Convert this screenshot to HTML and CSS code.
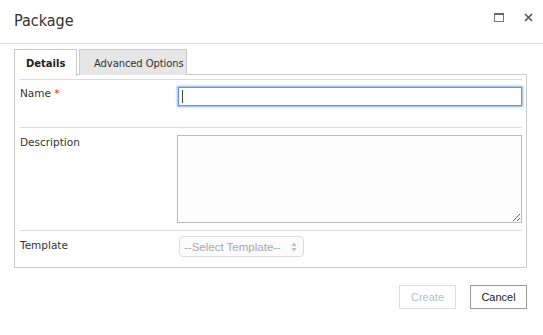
FILE: index.html
```html
<!DOCTYPE html>
<html>
<head>
<meta charset="utf-8">
<link rel="stylesheet" href="styles.css">
</head>
<body>
<div class="dialog">
  <div class="header">
    <div class="title">Package</div>
    <div class="actions">
      <svg class="icon-max" width="10" height="9" viewBox="0 0 10 9"><rect x="0.5" y="0.5" width="9" height="8" fill="none" stroke="#777" stroke-width="1"/><rect x="0" y="0" width="10" height="2" fill="#666"/></svg>
      <svg class="icon-close" width="9" height="9" viewBox="0 0 9 9"><path d="M1 1L8 8M8 1L1 8" stroke="#555" stroke-width="1.6"/></svg>
    </div>
  </div>
  <div class="content">
    <div class="tabs">
      <div class="tab active">Details</div>
      <div class="tab tab-adv">Advanced Options</div>
    </div>
    <div class="panel">
      <div class="row row-name">
        <div class="label">Name <span class="req">*</span></div>
        <div class="field">
          <div class="input-wrap">
            <input class="text-input" type="text">
            <span class="caret"></span>
          </div>
        </div>
      </div>
      <div class="row row-desc">
        <div class="label">Description</div>
        <div class="field"><textarea class="textarea"></textarea></div>
      </div>
      <div class="row row-tpl">
        <div class="label">Template</div>
        <div class="field">
          <div class="select">
            <span class="select-text">--Select Template--</span>
            <svg class="select-arrows" width="6" height="10" viewBox="0 0 6 10"><path d="M3 0.5L5.5 4H0.5Z M3 9.5L5.5 6H0.5Z" fill="#bbb"/></svg>
          </div>
        </div>
      </div>
    </div>
    <div class="footer">
      <button class="btn btn-disabled">Create</button>
      <button class="btn">Cancel</button>
    </div>
  </div>
</div>
</body>
</html>
```
FILE: styles.css
```css
html, body {
  margin: 0;
  padding: 0;
  background: #fff;
}
body {
  font-family: "DejaVu Sans", Verdana, sans-serif;
  color: #333;
}
.dialog {
  width: 543px;
  height: 335px;
}
.header {
  height: 43px;
  border-bottom: 1px solid #ddd;
  display: flex;
  align-items: center;
  padding: 0 10px 0 14px;
}
.title {
  flex: 1;
  font-size: 16px;
  font-stretch: semi-condensed;
  color: #333;
  margin-top: -3px;
}
.actions {
  display: flex;
  align-items: center;
  gap: 20px;
  margin-top: -9px;
}
.content {
  padding: 5px 16px 0 14px;
}
.tabs {
  display: flex;
  gap: 2px;
  height: 26px;
  position: relative;
  z-index: 1;
  margin-bottom: -1px;
}
.tab {
  box-sizing: border-box;
  height: 26px;
  border: 1px solid #ccc;
  border-bottom: none;
  background: #e6e6e6;
  font-size: 10px;
  color: #333;
  display: flex;
  align-items: center;
  white-space: nowrap;
  padding: 1px 0 0 14px;
}
.tab-adv {
  width: 108px;
  letter-spacing: -0.1px;
}
.tab.active {
  background: #fff;
  font-weight: bold;
  color: #222;
  width: 63px;
  padding-left: 11px;
  height: 27px;
}
.panel {
  border: 1px solid #ccc;
  box-sizing: border-box;
  padding: 4px 4px 0 5px;
  height: 194px;
}
.row {
  display: flex;
  border-top: 1px solid #ddd;
}
.label {
  width: 158px;
  font-size: 10.5px;
  line-height: 14px;
  color: #333;
}
.req {
  color: #e0282e;
}
.field {
  flex: 1;
}
.row-name {
  padding: 7px 0 21px 0;
}
.row-name .label {
  margin-top: -1px;
}
.input-wrap {
  position: relative;
}
.text-input {
  display: block;
  box-sizing: border-box;
  width: 344px;
  height: 19px;
  margin: 0;
  border: 1px solid #5b9dd9;
  box-shadow: 0 0 2px 1px rgba(91, 157, 217, 0.75);
  outline: none;
  padding: 0 4px;
  background: #fff;
}
.caret {
  position: absolute;
  left: 4px;
  top: 3px;
  width: 1px;
  height: 13px;
  background: #444;
}
.row-desc {
  padding: 7px 0 7px 0;
}
.textarea {
  display: block;
  box-sizing: border-box;
  width: 345px;
  height: 88px;
  margin: 0;
  border: 1px solid #bbb;
  background: #fdfdfd;
  padding: 2px;
  resize: both;
}
.row-tpl {
  padding: 5px 0 0 0;
}
.row-tpl .label {
  margin-top: 2px;
}
.select {
  box-sizing: border-box;
  width: 125px;
  height: 21px;
  margin-left: 1px;
  border: 1px solid #ddd;
  border-radius: 4px;
  display: flex;
  align-items: center;
  justify-content: space-between;
  padding: 0 6px 0 4px;
  font-family: "Liberation Sans", Arial, sans-serif;
  font-size: 11.5px;
  color: #aaa;
  background: #fbfbfb;
}
.select-arrows {
  display: block;
}
.footer {
  display: flex;
  justify-content: flex-end;
  gap: 14px;
  margin-top: 17px;
}
.btn {
  box-sizing: border-box;
  width: 57px;
  height: 24px;
  margin: 0;
  padding: 0;
  border: 1px solid #999;
  background: #fff;
  font-family: "Liberation Sans", Arial, sans-serif;
  font-size: 11px;
  color: #222;
  border-radius: 0;
}
.btn-disabled {
  border-color: #ddd;
  color: #bbb;
}
```
